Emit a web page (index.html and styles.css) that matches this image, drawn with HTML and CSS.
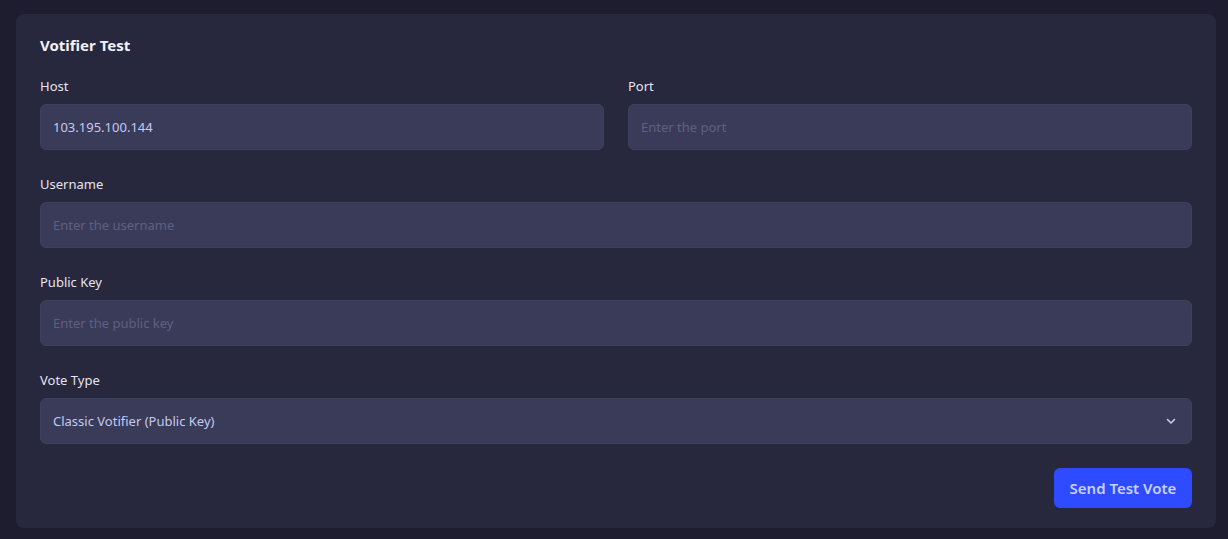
FILE: index.html
```html
<!DOCTYPE html>
<html lang="en">
<head>
<meta charset="utf-8">
<title>Votifier Test</title>
<link rel="stylesheet" href="styles.css">
</head>
<body>
<main class="page">
  <section class="card">
    <h2 class="card-title">Votifier Test</h2>
    <div class="row">
      <div class="field">
        <label class="label">Host</label>
        <input class="input" type="text" value="103.195.100.144">
      </div>
      <div class="field">
        <label class="label">Port</label>
        <input class="input" type="text" placeholder="Enter the port">
      </div>
    </div>
    <div class="field">
      <label class="label">Username</label>
      <input class="input" type="text" placeholder="Enter the username">
    </div>
    <div class="field">
      <label class="label">Public Key</label>
      <input class="input" type="text" placeholder="Enter the public key">
    </div>
    <div class="field">
      <label class="label">Vote Type</label>
      <div class="select">
        <span>Classic Votifier (Public Key)</span>
        <svg class="chev" width="12" height="12" viewBox="0 0 12 12"><path d="M2.5 4.5 L6 8 L9.5 4.5" fill="none" stroke="#c9cbe6" stroke-width="1.6" stroke-linecap="round" stroke-linejoin="round"/></svg>
      </div>
    </div>
    <div class="actions">
      <button class="btn" type="button">Send Test Vote</button>
    </div>
  </section>
</main>
</body>
</html>
```
FILE: styles.css
```css
* { box-sizing: border-box; }
html, body { margin: 0; padding: 0; }
body {
  background: #1d1d2f;
  font-family: "Noto Sans", "Open Sans", sans-serif;
  color: #e6e6f0;
  height: 539px;
  overflow: hidden;
}
.page {
  padding: 14px 12px 0 16px;
}
.card {
  width: 1200px;
  background: #27273d;
  border-radius: 8px;
  padding: 20px 24px 20px 24px;
}
.card-title {
  margin: 0 0 20px 0;
  font-size: 15px;
  line-height: 22px;
  font-weight: 700;
  color: #f2f2f8;
}
.row {
  display: grid;
  grid-template-columns: 1fr 1fr;
  gap: 24px;
}
.field {
  display: flex;
  flex-direction: column;
  margin-bottom: 24px;
}
.label {
  font-size: 13px;
  line-height: 20px;
  margin-bottom: 8px;
  color: #e4e4ee;
}
.input, .select {
  height: 46px;
  width: 100%;
  background: #3a3b58;
  border: 1px solid #3e3f5d;
  border-radius: 6px;
  padding: 0 12px;
  font-family: inherit;
  font-size: 13px;
  color: #c5c9ee;
  outline: none;
}
.input::placeholder { color: #5e6082; }
.select {
  display: flex;
  align-items: center;
  justify-content: space-between;
  padding-right: 14px;
}
.chev { display: block; }
.actions {
  display: flex;
  justify-content: flex-end;
}
.btn {
  height: 40px;
  width: 138px;
  border: 0;
  border-radius: 6px;
  background: #2f4bff;
  color: #c9d0ff;
  font-family: inherit;
  font-size: 15px;
  font-weight: 600;
  cursor: pointer;
}
```
